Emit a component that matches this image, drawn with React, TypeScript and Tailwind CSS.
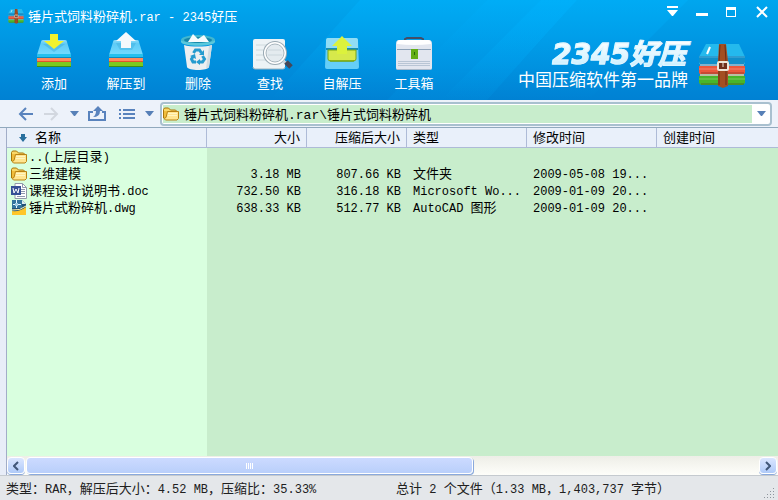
import React from 'react';

/* Mixed script text: Latin runs are set in a slim mono face beside the CJK glyphs. */
function Text({ children }: { children: string }) {
  const parts = children.split(/([\x20-\x7e]+)/).filter(Boolean);
  return (
    <>
      {parts.map((part, i) =>
        /^[\x20-\x7e]/.test(part) ? (
          <span key={i} className="font-['Liberation_Mono','Noto_Sans_CJK_SC',monospace] text-[12px] leading-none whitespace-pre">{part}</span>
        ) : (
          <span key={i}>{part}</span>
        ),
      )}
    </>
  );
}

function Stack() {
  return (
    <>
      <defs>
        <linearGradient id="lid" x1="0" y1="0" x2="0" y2="1">
          <stop offset="0" stopColor="#8fdcf8" />
          <stop offset=".25" stopColor="#5fcbf6" />
          <stop offset="1" stopColor="#74dbff" />
        </linearGradient>
      </defs>
      <path d="M5 11q0-2 2-2h22q2 0 2 2l4 13H1z" fill="url(#lid)" />
      <rect x="1" y="23" width="34" height="4" fill="#25c0ee" />
      <rect x="1" y="26" width="34" height="1" fill="#0a8cc0" />
      <rect x="1" y="27" width="34" height="4" fill="#ff8a5e" />
      <rect x="1" y="30" width="34" height="1" fill="#e0532c" />
      <rect x="1" y="31" width="34" height="5" rx="1" fill="#7cca1e" />
      <rect x="1" y="35" width="34" height="1" fill="#3c8d15" />
    </>
  );
}

function AddIcon() {
  return (
    <svg width="36" height="40" viewBox="0 0 36 40" aria-hidden="true">
      <Stack />
      <path d="M7 13h22L18 21z" fill="#2a9fd0" opacity=".35" />
      <path d="M14 3h8v7h6l-10 8-10-8h6z" fill="#f2f22c" />
    </svg>
  );
}

function ExtractIcon() {
  return (
    <svg width="36" height="40" viewBox="0 0 36 40" aria-hidden="true">
      <Stack />
      <path d="M8 12h20l-4 7H12z" fill="#2a9fd0" opacity=".3" />
      <path d="M18 1l10 9h-5v7H13v-7H8z" fill="#f5f9fc" />
    </svg>
  );
}

function DeleteIcon() {
  return (
    <svg width="36" height="42" viewBox="0 0 36 42" aria-hidden="true">
      <ellipse cx="18" cy="9" rx="17" ry="5" fill="#42b7cf" />
      <ellipse cx="18" cy="9" rx="14" ry="3" fill="#1687a9" />
      <path d="M8 11l5-8 5 5 6-4 5 7z" fill="#f6fbfd" />
      <path d="M1 9c1 4 33 4 34 0v2c-2 5-32 5-34 0z" fill="#5ac8dc" />
      <path d="M4 14c6 2 22 2 28 0l-3 22c-1 4-21 4-22 0z" fill="#eceff1" />
      <path d="M29 15l3-1-3 22-3 2z" fill="#d2dce1" />
      <g fill="none" stroke="#249bcf" strokeWidth="3">
        <path d="M13.500 22l2-3h4l2 3" />
        <path d="M22.500 25l2 3-2 3h-3" />
        <path d="M16 31h-3l-1.500-3 2-3" />
      </g>
      <path d="M24 19v5h-5zM20 28v6l-4-3zM10 25l5-2 1 5z" fill="#249bcf" />
    </svg>
  );
}

function SearchIcon() {
  return (
    <svg width="46" height="40" viewBox="-6 0 46 40" aria-hidden="true">
      <rect x="0" y="8" width="32" height="30" rx="2" fill="#edf3f6" />
      <path d="M0 36q0 2 2 2h28q2 0 2-2" stroke="#9bb5c2" fill="none" />
      <path d="M3 14h23M3 19h20M3 24h20M3 29h24" stroke="#cfdade" />
      <circle cx="22" cy="22" r="12" fill="#98a8b2" />
      <circle cx="22" cy="22" r="11" fill="#fff" />
      <circle cx="22" cy="22" r="9" fill="#e4ebef" stroke="#a9b6be" />
      <path d="M15 19h13M15 24h14" stroke="#cbd6dc" />
      <path d="M30 30l3 2" stroke="#cbd5db" strokeWidth="3" />
      <path d="M33 31l5 5" stroke="#454758" strokeWidth="5" />
    </svg>
  );
}

function SfxIcon() {
  return (
    <svg width="36" height="40" viewBox="0 0 36 40" aria-hidden="true">
      <path d="M4 7h28q2 0 2 3l1 26q0 2-2 2H3q-2 0-2-2l1-26q0-3 2-3z" fill="#65cef8" />
      <path d="M4 7h28q2 0 2 3v8H2v-8q0-3 2-3z" fill="#91ddf5" />
      <rect x="2" y="17" width="32" height="2" fill="#178fb4" />
      <path d="M4 19h28v9q0 2-3 2H7q-3 0-3-2z" fill="#d6e94b" stroke="#78a517" />
      <path d="M6 30h24" stroke="#6e9d00" strokeWidth="1" />
      <path d="M18 5l10 10h-5v8H13v-8H8z" fill="#dcf23c" />
    </svg>
  );
}

function ToolboxIcon() {
  return (
    <svg width="38" height="40" viewBox="0 0 38 40" aria-hidden="true">
      <path d="M10 12V8l2-1h14l2 1v4" fill="none" stroke="#454d66" strokeWidth="2" />
      <path d="M4 9h30q3 0 3 4v24q0 2-2 2H3q-2 0-2-2V13q0-4 3-4z" fill="#e2e6ef" />
      <path d="M5 9h28q3 0 3 4-17 2-34 0 0-4 3-4z" fill="#fff" />
      <path d="M2 18.500h34" stroke="#8ea2b8" />
      <path d="M3 30.500h32M3 32.500h32M3 34.500h32" stroke="#b8c5d4" />
      <path d="M2 38.500h34" stroke="#a9b9c9" />
      <path d="M16 18h7v10h-7z" fill="#62ae16" />
      <path d="M19.500 21v3" stroke="#256b05" strokeWidth="1" />
    </svg>
  );
}

function ArchiveIcon({ size }: { size: number }) {
  return (
    <svg width={size} height={size} viewBox="0 0 48 48" aria-hidden="true">
      <path d="M8 3h33l6 13v7H1v-7z" fill="#24b9ed" />
      <path d="M1 15h46v6l-1 2H2l-1-2z" fill="#118fc9" />
      <path d="M2 23h44v2H2z" fill="#7fb4cf" />
      <path d="M1 25h46v7l-1 1H2l-1-1z" fill="#ec573c" />
      <path d="M2 33h44v2H2z" fill="#b9bfa6" />
      <path d="M1 35h46v7l-2 2H3l-2-2z" fill="#48b52a" />
      <path d="M1 16h46M1 28h46M1 38h46" stroke="#fff" opacity=".25" />
      <path d="M3 32h43M3 43h43" stroke="#5b271c" opacity=".5" />
      <path d="M21 3h7l2 17v25l-5 2-5-2V20z" fill="#a34f22" />
      <path d="M22 4l-1 17v23M27 4l1 17v23" stroke="#6e2e17" fill="none" />
      <rect x="20" y="21" width="10" height="8" rx="1" fill="#702f1a" stroke="#eee6d8" strokeWidth="2" />
      <path d="M25 21v5" stroke="#eee6d8" />
      <path d="M12 6l-3 7" stroke="#fff" strokeWidth="2" />
    </svg>
  );
}

function FolderIcon() {
  return (
    <svg width="17" height="16" viewBox="0 0 17 16" className="shrink-0" aria-hidden="true">
      <path d="M.5 12V3.500l1-1.500h4l2 2h5l1 1v3" fill="#f9d767" stroke="#a97509" />
      <path d="M1 12V5h12v8H2z" fill="#f0bd3c" />
      <path d="M4.500 5.500h11v7l-1.500 1.500H2.500L1 12.500l2-1z" fill="#ffe590" stroke="#b98213" />
      <path d="M5 7.500h9M5 9.500h9" stroke="#fff5c2" />
    </svg>
  );
}

function DocIcon() {
  return (
    <svg width="17" height="16" viewBox="0 0 17 16" className="shrink-0" aria-hidden="true">
      <path d="M4 .5h7.500l4 4v11H4z" fill="#fff" stroke="#939aaa" />
      <path d="M11.500 .5v4h4M10 6.500h4M10 8.500h4M10 10.500h4M6 13.500h8" stroke="#8f98ad" fill="none" />
      <rect x="0" y="3" width="10" height="9" fill="#364f96" />
      <path d="M2 5l1 5 2-4 2 4 1-5" fill="none" stroke="#fff" strokeWidth="1" />
    </svg>
  );
}

function DwgIcon() {
  return (
    <svg width="17" height="16" viewBox="0 0 17 16" className="shrink-0" aria-hidden="true">
      <path d="M1 0h10l4 4v11H1z" fill="#215277" />
      <path d="M1 0h10v8H1z" fill="#32759d" />
      <path d="M11 0l4 4h-4z" fill="#dbeaf0" />
      <path d="M5.500 0v8M2 4.500h8" stroke="#e7f6ff" />
      <rect x="4" y="3" width="3" height="3" fill="#9acae1" />
      <path d="M1 11q8 1 14-4v8H1z" fill="#ffc629" />
      <path d="M1 10q8 1 14-4" fill="none" stroke="#fff2b0" />
    </svg>
  );
}

const tools = [
  { label: '添加', icon: <AddIcon /> },
  { label: '解压到', icon: <ExtractIcon /> },
  { label: '删除', icon: <DeleteIcon /> },
  { label: '查找', icon: <SearchIcon /> },
  { label: '自解压', icon: <SfxIcon /> },
  { label: '工具箱', icon: <ToolboxIcon /> },
];

const files = [
  { icon: <FolderIcon />, name: '..(上层目录)', size: '', packed: '', type: '', modified: '' },
  { icon: <FolderIcon />, name: '三维建模', size: '3.18 MB', packed: '807.66 KB', type: '文件夹', modified: '2009-05-08 19...' },
  { icon: <DocIcon />, name: '课程设计说明书.doc', size: '732.50 KB', packed: '316.18 KB', type: 'Microsoft Wo...', modified: '2009-01-09 20...' },
  { icon: <DwgIcon />, name: '锤片式粉碎机.dwg', size: '638.33 KB', packed: '512.77 KB', type: 'AutoCAD 图形', modified: '2009-01-09 20...' },
];

function Header() {
  return (
    <header className="relative h-[100px] shrink-0 overflow-hidden bg-linear-to-b from-[#00a6ee] to-[#0081d3] text-white">
      <svg className="absolute inset-0 h-full w-full" viewBox="0 0 778 100" preserveAspectRatio="none" aria-hidden="true">
        <defs>
          <linearGradient id="beam" x1="0" y1="0" x2="0" y2="1">
            <stop offset="0" stopColor="#00b4ff" stopOpacity=".5" />
            <stop offset="1" stopColor="#00a0ee" stopOpacity=".15" />
          </linearGradient>
          <linearGradient id="glow" x1="0" y1="0" x2="0" y2="1">
            <stop offset="0" stopColor="#00b4ff" stopOpacity=".35" />
            <stop offset="1" stopColor="#00b4ff" stopOpacity="0" />
          </linearGradient>
        </defs>
        <path d="M360 0h127L387 100H270z" fill="url(#glow)" />
        <path d="M487 0h90L547 33 487 100H387z" fill="url(#beam)" />
        <path d="M541 0h36L547 33 487 100H441z" fill="url(#glow)" />
        <path d="M577 0h111L588 100H487z" fill="url(#glow)" />
      </svg>
      <div className="relative flex h-[29px] items-start justify-between">
        <h1 className="flex h-8 items-center gap-1 pl-2 text-[13px]">
          <ArchiveIcon size={16} />
          <span><Text>锤片式饲料粉碎机.rar - 2345好压</Text></span>
        </h1>
        <div className="flex h-6 items-center gap-[14px] pr-2">
          <button aria-label="菜单" className="flex h-4 w-4 items-center justify-center">
            <svg width="12" height="12" viewBox="0 0 12 12"><path d="M1 0h11v2H1zM1 4h11l-5 6H6z" fill="white" /></svg>
          </button>
          <button aria-label="最小化" className="flex h-4 w-4 items-center justify-center">
            <svg width="12" height="12" viewBox="0 0 12 12"><path d="M0 7h12v3H0z" fill="white" /></svg>
          </button>
          <button aria-label="最大化" className="flex h-4 w-4 items-center justify-center">
            <svg width="12" height="12" viewBox="0 0 12 12"><path d="M0 1h10v10H0zM1 4v6h8V4z" fill="white" fillRule="evenodd" /></svg>
          </button>
          <button aria-label="关闭" className="flex h-4 w-4 items-center justify-center">
            <svg width="12" height="12" viewBox="0 0 12 12"><path d="M1 1l10 10M11 1L1 11" stroke="white" strokeWidth="2" /></svg>
          </button>
        </div>
      </div>
      <div className="relative flex h-[71px] justify-between">
        <nav className="flex pl-[18px]" aria-label="工具栏">
          {tools.map((tool) => (
            <button key={tool.label} className="flex w-[72px] flex-col items-center text-[13px] leading-6">
              <span className="flex h-[43px] items-start pt-0.5">{tool.icon}</span>
              {tool.label}
            </button>
          ))}
        </nav>
        <div className="flex items-start gap-2 pr-8">
          <div className="flex flex-col items-end pt-[10px] whitespace-nowrap">
            <div className="bg-linear-to-b from-white to-[#c2edff] bg-clip-text pr-1 font-['DejaVu_Sans','Noto_Sans_CJK_SC',sans-serif] text-[28px] leading-8 font-bold text-transparent italic [-webkit-text-stroke:1px_#e0f6ff]">2345好压</div>
            <div className="pr-0.5 font-['Liberation_Sans','Noto_Sans_CJK_SC',sans-serif] text-[17px] leading-5">中国压缩软件第一品牌</div>
          </div>
          <div className="pt-3"><ArchiveIcon size={48} /></div>
        </div>
      </div>
    </header>
  );
}

function Caret() {
  return <svg width="9" height="5" viewBox="0 0 9 5" aria-hidden="true"><path d="M0 0h9L5 5H4z" fill="#5780b7" /></svg>;
}

function AddressBar() {
  return (
    <div className="flex h-[27px] shrink-0 items-center bg-[#edf2fa] pr-1.5 pl-[18px]">
      <div className="flex w-[142px] shrink-0 items-center">
        <button aria-label="后退" className="w-[26px]">
          <svg width="16" height="16" viewBox="0 0 16 16"><path d="M8 2L2 8l6 6M2 8h13" fill="none" stroke="#5983bd" strokeWidth="2" /></svg>
        </button>
        <button aria-label="前进" className="w-[26px]">
          <svg width="16" height="16" viewBox="0 0 16 16"><path d="M7 2l6 6-6 6M13 8H0" fill="none" stroke="#d2d7df" strokeWidth="2" /></svg>
        </button>
        <button aria-label="历史记录" className="w-[18px]"><Caret /></button>
        <button aria-label="向上" className="w-[31px]">
          <svg width="19" height="16" viewBox="0 0 19 16">
            <path d="M5 6H1v8h16V6h-3" fill="none" stroke="#5983bd" strokeWidth="2" />
            <path d="M10 0l5 5h-3q0 6-7 6 3-2 3-6H5z" fill="#5983bd" />
          </svg>
        </button>
        <button aria-label="查看方式" className="w-[26px]">
          <svg width="16" height="12" viewBox="0 0 16 12"><path d="M0 2h2M0 6h2M0 10h2M4 2h12M4 6h12M4 10h12" stroke="#5983bd" strokeWidth="2" /></svg>
        </button>
        <button aria-label="查看菜单" className="w-[12px]"><Caret /></button>
      </div>
      <div className="flex h-6 min-w-0 flex-1 items-center rounded-sm border-2 border-[#a9c0cf] bg-white pl-px">
        <div className="flex h-[18px] min-w-0 flex-1 items-center gap-1 bg-[#c8edcc]">
          <FolderIcon />
          <input aria-label="路径" defaultValue="锤片式饲料粉碎机.rar\锤片式饲料粉碎机" className="h-full min-w-0 flex-1 bg-transparent font-['Liberation_Mono','Noto_Sans_CJK_SC',monospace] text-[13px] outline-none" />
        </div>
        <button aria-label="展开路径" className="flex w-[18px] justify-center"><Caret /></button>
      </div>
    </div>
  );
}

function FileTable() {
  const head = 'border-r border-b border-[#aebbd7] px-1.5 font-normal';
  return (
    <div className="flex min-h-0 flex-1 border-l border-[#a2adc8]">
      <table className="h-full w-full table-fixed border-separate border-spacing-0 bg-[#c8edcc]">
        <colgroup>
          <col className="w-[200px]" />
          <col className="w-[100px]" />
          <col className="w-[100px]" />
          <col className="w-[120px]" />
          <col className="w-[130px]" />
          <col />
        </colgroup>
        <thead className="bg-[#e9f0fa] leading-[15px]">
          <tr className="h-5 text-left">
            <th className={head}>
              <div className="flex items-center gap-2 pl-1.5">
                <svg width="8" height="8" viewBox="0 0 8 8" aria-hidden="true"><path d="M2 0h4v3h2L4 8 0 3h2z" fill="#286f9d" /></svg>
                名称
              </div>
            </th>
            <th className={head + ' text-right'}>大小</th>
            <th className={head + ' text-right'}>压缩后大小</th>
            <th className={head}>类型</th>
            <th className={head}>修改时间</th>
            <th className="border-b border-[#aebbd7] px-1.5 font-normal">创建时间</th>
          </tr>
        </thead>
        <tbody className="leading-[15px]">
          {files.map((file) => (
            <tr key={file.name} className="h-[17px] whitespace-nowrap">
              <td className="bg-[#d9ffdf] pl-1">
                <div className="flex h-[17px] items-center gap-px">
                  {file.icon}
                  <span><Text>{file.name}</Text></span>
                </div>
              </td>
              <td className="pr-1.5 text-right"><Text>{file.size}</Text></td>
              <td className="pr-1.5 text-right"><Text>{file.packed}</Text></td>
              <td className="pl-1.5"><Text>{file.type}</Text></td>
              <td className="pl-1.5"><Text>{file.modified}</Text></td>
              <td />
            </tr>
          ))}
          <tr>
            <td className="bg-[#d9ffdf]" />
            <td colSpan={5} />
          </tr>
        </tbody>
      </table>
    </div>
  );
}

function ScrollBar() {
  const arrow = 'flex w-[18px] shrink-0 items-center justify-center rounded-sm border border-white bg-linear-to-b from-[#dbe6ff] to-[#afcaf8] shadow-[0_1px_0_#8aa9dc]';
  return (
    <div className="flex h-[19px] shrink-0 border-l border-[#a2adc8] bg-linear-to-b from-[#eeeee7] to-[#fefefa] pt-px pr-px pb-px">
      <button aria-label="向左滚动" className={arrow}>
        <svg width="6" height="10" viewBox="0 0 6 10"><path d="M5 1L1 5l4 4" fill="none" stroke="#415779" strokeWidth="2" /></svg>
      </button>
      <div className="flex flex-1 pl-px">
        <div className="flex w-[61%] items-center justify-center gap-px rounded-sm border border-white bg-linear-to-b from-[#ccdaff] to-[#b9cffa] shadow-[1px_1px_0_#8aa9dc]">
          <i className="h-1.5 w-px bg-white" />
          <i className="h-1.5 w-px bg-white" />
          <i className="h-1.5 w-px bg-white" />
          <i className="h-1.5 w-px bg-white" />
        </div>
      </div>
      <button aria-label="向右滚动" className={arrow}>
        <svg width="6" height="10" viewBox="0 0 6 10"><path d="M1 1l4 4-4 4" fill="none" stroke="#415779" strokeWidth="2" /></svg>
      </button>
    </div>
  );
}

function StatusBar() {
  return (
    <footer className="flex h-[25px] shrink-0 items-center border-t border-[#c5cacf] bg-[#e4e7ea] pl-1.5 whitespace-nowrap text-[#202020]">
      <span className="w-1/2"><Text>类型：RAR，解压后大小：4.52 MB，压缩比：35.33%</Text></span>
      <span className="flex-1 pl-1"><Text>总计 2 个文件（1.33 MB，1,403,737 字节）</Text></span>
      <svg width="12" height="12" viewBox="0 0 12 12" className="mr-0.5 self-end" aria-hidden="true">
        <path d="M9 0h1v1H9zM6 3h1v1H6zM9 3h1v1H9zM3 6h1v1H3zM6 6h1v1H6zM9 6h1v1H9zM0 9h1v1H0zM3 9h1v1H3zM6 9h1v1H6zM9 9h1v1H9z" fill="#8e959d" />
      </svg>
    </footer>
  );
}

export default function App() {
  return (
    <main className="flex h-screen flex-col overflow-hidden bg-[#e4e7ea] font-['Liberation_Sans','Noto_Sans_CJK_SC',sans-serif] text-[13px] leading-[17px] text-black">
      <Header />
      <AddressBar />
      <div className="flex min-h-0 flex-1 flex-col border-t border-[#91a9bd] bg-[#e8edf8] pl-1.5">
        <FileTable />
        <ScrollBar />
      </div>
      <StatusBar />
    </main>
  );
}
